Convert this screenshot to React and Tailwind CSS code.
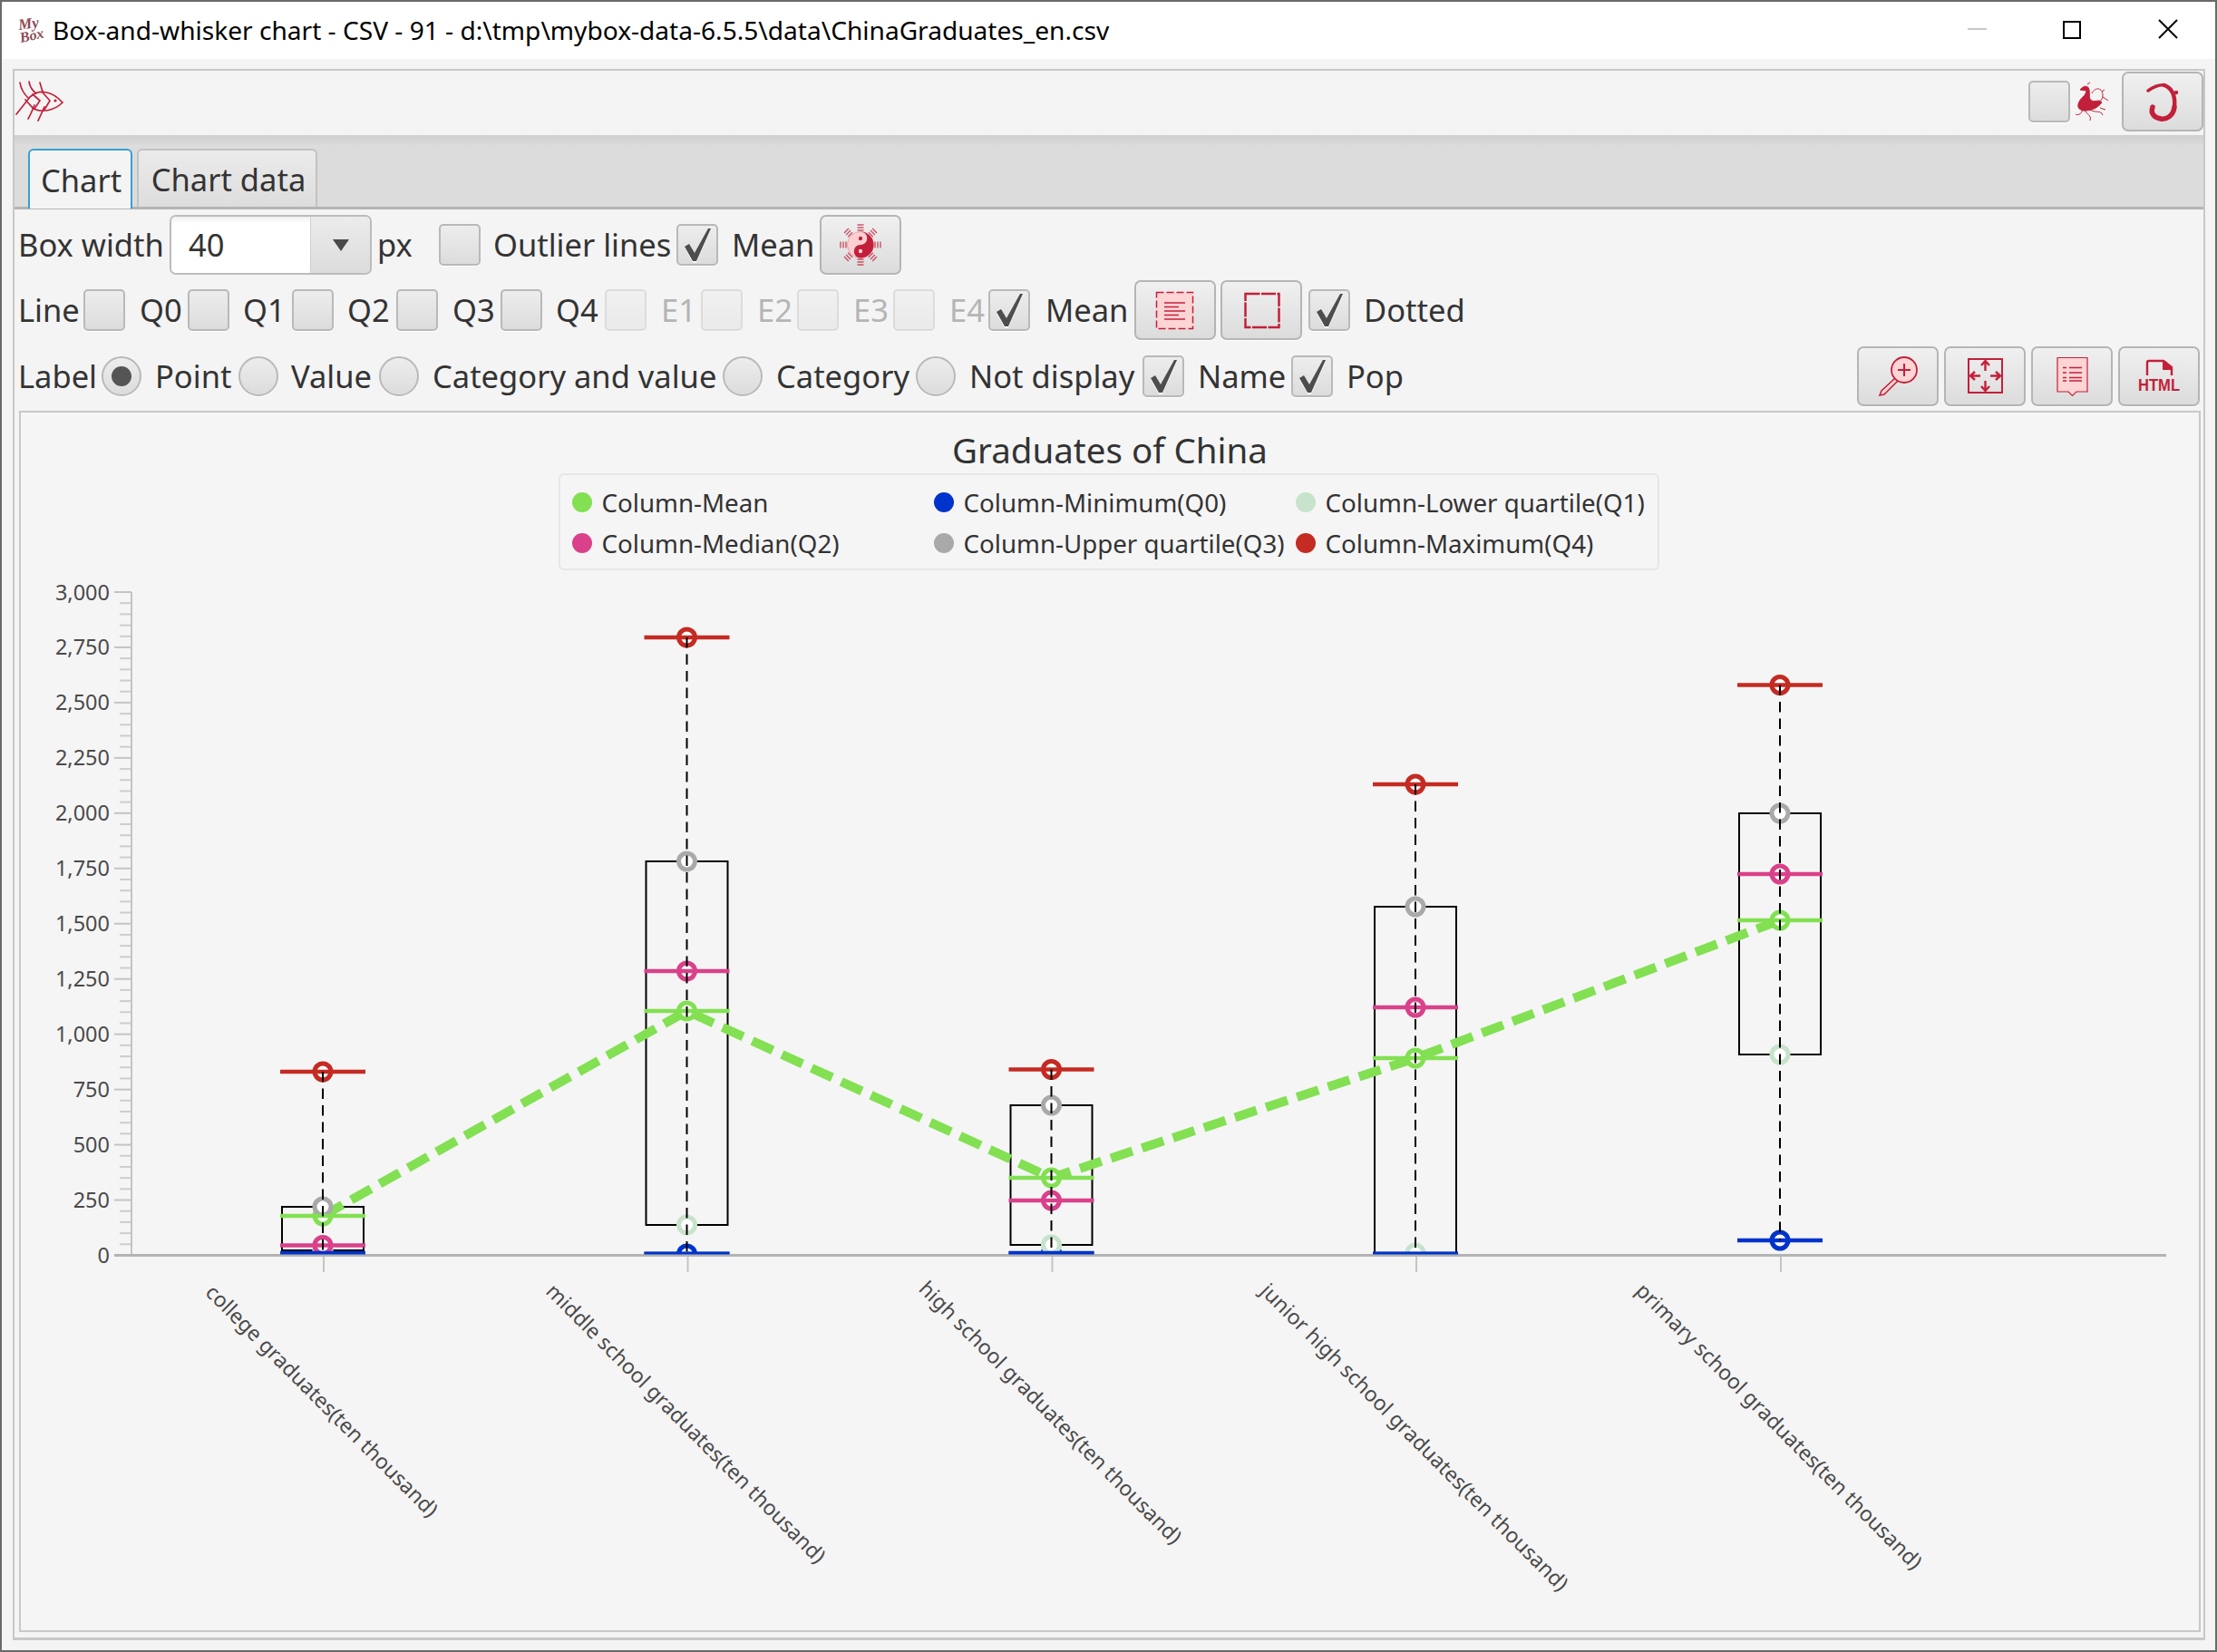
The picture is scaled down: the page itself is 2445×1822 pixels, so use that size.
const RED = "#c2203a";
const PINK = "#ffd4d4";

const Check = () => (
  <svg viewBox="0 0 42 42" className="w-[42px] h-[42px]">
    <path d="M7 23 L12 20 L18 30 L33 3 L36 3 L20 39 L16 39 Z" fill="#fff" transform="translate(0 1.5)" />
    <path d="M7 23 L12 20 L18 30 L33 3 L36 3 L20 39 L16 39 Z" fill="#4d4d4d" />
  </svg>
);

const CheckBox = ({ checked, disabled }) => (
  <div
    className={`box-border w-[46px] h-[46px] shrink-0 rounded-[5px] border-2 border-[#b9b9b9] bg-gradient-to-b from-[#ededed] to-[#dcdcdc] shadow-[0_1px_0_#fff] ${
      disabled ? "opacity-40" : ""
    }`}
  >
    {checked && <Check />}
  </div>
);

const Radio = ({ checked }) => (
  <div className="box-border w-[44px] h-[44px] shrink-0 rounded-full border-2 border-[#b9b9b9] bg-gradient-to-b from-[#ededed] to-[#dcdcdc] shadow-[0_1px_0_#fff] flex items-center justify-center">
    {checked && <div className="w-[22px] h-[22px] rounded-full bg-[#555]" />}
  </div>
);

const Btn = ({ box, children, className = "" }) => (
  <div className={`box-border w-[90px] h-[66px] shrink-0 rounded-[7px] border-2 border-[#b5b5b5] bg-gradient-to-b from-[#f0f0f0] to-[#dcdcdc] shadow-[0_1px_0_#fff] ${className}`}>
    <svg viewBox={box} className="w-[86px] h-[62px]">
      {children}
    </svg>
  </div>
);

const trigrams = [0, 45, 90, 135, 180, 225, 270, 315];

const YinYang = () => (
  <Btn box="906 239 86 62">
    {trigrams.map((a) => (
      <g key={a} transform={`rotate(${a} 949 270)`} stroke={RED} strokeWidth="1.4" opacity="0.75">
        <path d="M945.5 248 H952.5 M945.5 251 H952.5 M945.5 254 H952.5" />
      </g>
    ))}
    <circle cx="949" cy="270" r="14.5" fill="#fcd0d2" stroke="#eaa6ae" strokeWidth="1" />
    <path d="M949 255.5 A14.5 14.5 0 0 1 949 284.5 A7.25 7.25 0 0 1 949 270 A7.25 7.25 0 0 0 949 255.5 Z" fill={RED} />
    <circle cx="949" cy="263" r="2.2" fill={RED} />
    <circle cx="949" cy="277" r="2.2" fill={PINK} />
  </Btn>
);

const RowIcon = () => (
  <Btn box="1253 311 86 62">
    <rect x="1275.5" y="322.5" width="40" height="40" fill={PINK} stroke={RED} strokeWidth="1.5" strokeDasharray="8 3" />
    <path d="M1284 334 H1307 M1284 338.5 H1300 M1284 343 H1307 M1284 347.5 H1300 M1284 352 H1307" stroke={RED} strokeWidth="1.5" />
  </Btn>
);

const BorderIcon = () => (
  <Btn box="1348 311 86 62">
    <rect x="1373.5" y="324" width="37" height="37" fill="none" stroke={RED} strokeWidth="2.5" strokeDasharray="16 1.5" />
  </Btn>
);

const ZoomIcon = () => (
  <Btn box="2050 384 86 62">
    <path d="M2090 417 L2075 431 L2073 436 L2078 435 L2093 420 Z" fill={PINK} stroke={RED} strokeWidth="1.5" />
    <circle cx="2100" cy="408" r="14" fill={PINK} stroke={RED} strokeWidth="1.8" />
    <path d="M2093 408 H2107 M2100 401 V415" stroke={RED} strokeWidth="2" />
  </Btn>
);

const FitIcon = () => (
  <Btn box="2146 384 86 62">
    <rect x="2171" y="396" width="37" height="37" fill="none" stroke={RED} strokeWidth="2" />
    <path d="M2189.5 398 V409 M2185 403 L2189.5 398 L2194 403 M2189.5 431 V420 M2185 426 L2189.5 431 L2194 426 M2173 414.5 H2184 M2178 410 L2173 414.5 L2178 419 M2206 414.5 H2195 M2201 410 L2206 414.5 L2201 419" fill="none" stroke={RED} strokeWidth="2.4" />
  </Btn>
);

const NoteIcon = () => (
  <Btn box="2242 384 86 62">
    <path d="M2269 394.5 H2302 V432 H2290 L2285.5 436.5 L2281 432 H2269 Z" fill={PINK} stroke={RED} strokeWidth="1.2" />
    <path d="M2275 405.5 H2279 M2282 405.5 H2296 M2275 411 H2279 M2282 411 H2296 M2275 416.5 H2279 M2282 416.5 H2296 M2275 420 H2279 M2282 420 H2296" stroke={RED} strokeWidth="1.5" />
  </Btn>
);

const HtmlIcon = () => (
  <Btn box="2338 384 86 62">
    <path d="M2368 414 V400 Q2368 398 2370 398 H2386 L2395 405 V414" fill="none" stroke={RED} strokeWidth="2.4" />
    <path d="M2385 398 H2388 L2395 405 V408 H2385 Z" fill={RED} />
    <text x="2358" y="431" textLength="46" lengthAdjust="spacingAndGlyphs" fill={RED} fontFamily="Liberation Sans" fontWeight="700" fontSize="19">HTML</text>
  </Btn>
);

const Logo = () => (
  <svg viewBox="0 0 40 36" className="w-[40px] h-[36px] shrink-0 ml-[-2px] overflow-visible">
    <text x="3" y="17" fontFamily="Liberation Serif" fontStyle="italic" fontWeight="700" fontSize="17" fill="#8d4b55" transform="rotate(-8 3 17)">My</text>
    <text x="5" y="31" fontFamily="Liberation Serif" fontStyle="italic" fontWeight="700" fontSize="16" fill="#8d4b55" transform="rotate(-12 5 31)">Box</text>
  </svg>
);

const Fish = () => (
  <svg viewBox="16 90 54 46" className="w-[54px] h-[46px]" fill="none" stroke={RED} strokeWidth="1.7" strokeLinecap="round">
    <path d="M17 128 L32 109 C42 100 56 102 68 115 C58 125 44 126 36 122 L27 112" />
    <path d="M21 93 C22 100 26 106 30 110 M31 92 C32 98 36 103 39 105 M43 93 C44 97 45 100 46 103 M30 133 C33 128 35 123 37 118 M41 135 C44 129 46 124 48 120" />
    <path d="M35 106 L43 113 L37 122 M46 104 L54 113 L48 123" />
    <circle cx="60" cy="113" r="1.6" fill={RED} stroke="none" />
  </svg>
);

const Phoenix = () => (
  <svg viewBox="2288 88 40 46" className="w-[40px] h-[46px] shrink-0 ml-[4px]" fill="none" stroke={RED} strokeWidth="1">
    <path d="M2293 114 C2295 106 2301 106 2302 99 L2295 98 C2298 94 2304 92 2305 98 C2306 104 2304 108 2308 110 C2312 112 2316 108 2319 112 C2314 119 2306 121 2300 121 C2295 121 2292 118 2293 114 Z" fill={RED} />
    <path d="M2306 120 C2312 124 2318 120 2320 126 M2300 120 C2302 126 2308 125 2306 132 M2298 120 C2296 126 2292 126 2290 125 M2308 102 C2312 94 2320 96 2320 104 C2320 110 2316 112 2314 110 M2319 100 L2322 98 M2320 106 L2326 110 M2303 92 L2306 90 M2317 118 L2323 120" />
  </svg>
);

const Dragon = () => (
  <svg viewBox="2343 81 86 62" className="w-[86px] h-[62px]" fill="none" stroke={RED} strokeLinecap="round">
    <path d="M2370 100 C2376 96 2382 93 2388 94" strokeWidth="3.5" />
    <path d="M2388 94 C2398 98 2400 108 2399 118" strokeWidth="4.5" />
    <path d="M2399 118 C2398 128 2390 132 2384 131 C2378 130 2372 126 2375 118" strokeWidth="5.5" />
    <circle cx="2401" cy="102" r="2.2" fill={RED} stroke="none" />
  </svg>
);

const legend = [
  ["Column-Mean", "#82e052"],
  ["Column-Minimum(Q0)", "#0033cc"],
  ["Column-Lower quartile(Q1)", "#c7e3cb"],
  ["Column-Median(Q2)", "#d9418a"],
  ["Column-Upper quartile(Q3)", "#a9a9a9"],
  ["Column-Maximum(Q4)", "#c42b23"],
];

const COLORS = { q0: "#0033cc", q1: "#c7e3cb", q2: "#d9418a", q3: "#a9a9a9", q4: "#c42b23", mean: "#82e052" };

const cats = [
  { x: 356, name: "college graduates(ten thousand)", ly: 1545, q0: 1382, q1: 1379, q2: 1373.5, q3: 1331, q4: 1182, mean: 1341 },
  { x: 757.5, name: "middle school graduates(ten thousand)", ly: 1570, q0: 1383, q1: 1351, q2: 1071, q3: 950, q4: 703, mean: 1115 },
  { x: 1159.5, name: "high school graduates(ten thousand)", ly: 1558, q0: 1382, q1: 1373, q2: 1324, q3: 1219, q4: 1179.5, mean: 1299 },
  { x: 1561, name: "junior high school graduates(ten thousand)", ly: 1585, q0: 1383, q1: 1382, q2: 1111, q3: 1000, q4: 865, mean: 1167 },
  { x: 1963, name: "primary school graduates(ten thousand)", ly: 1573, q0: 1368, q1: 1163, q2: 964, q3: 897, q4: 755.5, mean: 1015 },
];

const AXIS_FONT = "'Noto Sans', sans-serif";

const Chart = () => {
  const majors = [...Array(13).keys()];
  const minors = [...Array(61).keys()].filter((i) => i % 5 !== 0);
  const yOf = (t) => 1384.5 - (t * 731.5) / 60;
  const meanPts = cats.map((c) => `${c.x},${c.mean}`).join(" ");
  return (
    <svg viewBox="23 640 2402 1157" className="w-[2402px] h-[1157px] absolute left-0 top-[185px]">
      <defs>
        <clipPath id="plot">
          <rect x="146" y="640" width="2243" height="743" />
        </clipPath>
      </defs>
      {minors.map((i) => (
        <line key={i} x1="132" x2="145" y1={yOf(i)} y2={yOf(i)} stroke="#cdcdcd" strokeWidth="2" />
      ))}
      {majors.map((i) => (
        <g key={i}>
          <line x1="126" x2="145" y1={yOf(i * 5)} y2={yOf(i * 5)} stroke="#c4c4c4" strokeWidth="2" />
          <text x="121" y={yOf(i * 5) + 8.5} textAnchor="end" fontFamily={AXIS_FONT} fontSize="23.5" fill="#4a4a4a">
            {(i * 250).toLocaleString("en-US")}
          </text>
        </g>
      ))}
      <line x1="145" x2="145" y1="653" y2="1385" stroke="#c4c4c4" strokeWidth="2" />
      {cats.map((c) => (
        <line key={c.x} x1={c.x + 1} x2={c.x + 1} y1="1385" y2="1403" stroke="#c4c4c4" strokeWidth="2" />
      ))}
      {cats.map((c) => (
        <rect key={c.x} x={c.x - 45} y={c.q3} width="90" height={Math.min(c.q1, 1384) - c.q3} fill="none" stroke="#000" strokeWidth="2" />
      ))}
      <polyline points={meanPts} fill="none" stroke={COLORS.mean} strokeWidth="10" strokeDasharray="25 11" />
      {cats.map((c) => (
        <g key={c.x}>
          <g clipPath="url(#plot)">
            {["q0", "mean", "q1", "q3", "q2", "q4"].map((k) => (
              <circle key={k} cx={c.x} cy={c[k]} r="9" fill="#fff" stroke={COLORS[k]} strokeWidth="5" />
            ))}
          </g>
          {["mean", "q2", "q4", "q0"].map((k) => (
            <line key={k} x1={c.x - 47} x2={c.x + 47} y1={c[k]} y2={c[k]} stroke={COLORS[k]} strokeWidth="4.5" />
          ))}
          <line x1={c.x} x2={c.x} y1={c.q4} y2={c.q0} stroke="#000" strokeWidth="2" strokeDasharray="11.5 7" />
          <text
            x={c.x - 1}
            y={c.ly + 8}
            textAnchor="middle"
            transform={`rotate(45 ${c.x - 1} ${c.ly})`}
            fontFamily={AXIS_FONT}
            fontSize="23"
            fill="#4a4a4a"
          >
            {c.name}
          </text>
        </g>
      ))}
      <line x1="126" x2="2389" y1="1384.5" y2="1384.5" stroke="#b4b4b4" strokeWidth="3" />
      {cats.map((c) => (
        <line key={c.x} x1={c.x - 47} x2={c.x + 47} y1="1382" y2="1382" stroke={c.q0 > 1380 ? COLORS.q0 : "none"} strokeWidth="3" />
      ))}
    </svg>
  );
};

export default function App() {
  return (
    <div className="relative w-[2445px] h-[1822px] box-border overflow-hidden border-2 border-[#6a6a6a] bg-[#f4f4f4] font-['Noto_Sans',sans-serif] text-[34.5px] leading-[1.3] text-[#333]">
      {/* Title bar */}
      <div className="flex items-center h-[63px] bg-white pl-[18px] pr-[40px] text-black">
        <Logo />
        <span className="text-[28.1px]">Box-and-whisker chart - CSV - 91 - d:\tmp\mybox-data-6.5.5\data\ChinaGraduates_en.csv</span>
        <svg viewBox="2160 2 250 60" className="ml-auto w-[250px] h-[60px] mr-[-8px]" fill="none">
          <path d="M2169 30 H2190" stroke="#c8c8c8" strokeWidth="2" />
          <rect x="2275" y="22" width="18" height="18" stroke="#000" strokeWidth="2" />
          <path d="M2380 20 L2400 40 M2400 20 L2380 40" stroke="#000" strokeWidth="2" />
        </svg>
      </div>

      {/* Main panel */}
      <div className="box-border ml-[12px] mt-[11px] w-[2418px] h-[1733px] border-2 border-b-[3px] border-[#c8c8c8] flex flex-col">
        {/* Top toolbar */}
        <div className="flex items-center h-[71px] shrink-0">
          <div className="ml-[1px] mb-[6px]">
            <Fish />
          </div>
          <div className="ml-auto mb-[4px] flex items-center">
            <CheckBox />
            <Phoenix />
            <div className="box-border w-[90px] h-[66px] ml-[13px] rounded-[7px] border-2 border-[#b5b5b5] bg-gradient-to-b from-[#f0f0f0] to-[#dcdcdc]">
              <Dragon />
            </div>
          </div>
        </div>

        {/* Tabs */}
        <div className="flex items-end gap-[5px] h-[82px] shrink-0 pl-[15px] bg-gradient-to-b from-[#cfcfcf] to-[#dcdcdc] to-[15%] border-b-[3px] border-[#b4b4b4]">
          <div className="box-border w-[115px] h-[66px] mb-[-2px] pl-[2px] pt-[3px] rounded-t-[6px] border-2 border-b-0 border-[#3aa0cf] bg-[#f4f4f4] flex items-center justify-center">
            Chart
          </div>
          <div className="box-border w-[199px] h-[64px] pl-[3px] pt-[3px] rounded-t-[6px] border-2 border-b-0 border-[#c2c2c2] bg-gradient-to-b from-[#ebebeb] to-[#dddddd] flex items-center justify-center">
            Chart data
          </div>
        </div>

        {/* Option rows */}
        <div className="flex items-center h-[66px] mt-[6px] pl-[5px] shrink-0 [&>span]:pt-[1px] [&>span]:translate-x-[-1px]">
          <span className="w-[166px]">Box width</span>
          <div className="box-border flex w-[223px] h-[66px] rounded-[7px] border-2 border-[#bcbcbc] overflow-hidden">
            <div className="flex-1 bg-gradient-to-b from-[#f0f0f0] to-white to-[12%] pl-[19px] pt-[1px] flex items-center">40</div>
            <div className="w-[66px] bg-gradient-to-b from-[#ececec] to-[#dcdcdc] border-l border-[#cfcfcf] flex items-center justify-center">
              <div className="w-0 h-0 border-x-[9px] border-x-transparent border-t-[13px] border-t-[#4a4a4a]" />
            </div>
          </div>
          <span className="w-[67px] ml-[7px]">px</span>
          <CheckBox />
          <span className="w-[201px] ml-[15px]">Outlier lines</span>
          <CheckBox checked />
          <span className="w-[96px] ml-[16px]">Mean</span>
          <YinYang />
        </div>

        <div className="flex items-center h-[66px] mt-[6px] pl-[5px] shrink-0 [&>span]:pt-[1px] [&>span]:translate-x-[-1px]">
          <span className="w-[71px]">Line</span>
          <CheckBox />
          <span className="w-[52px] ml-[17px]">Q0</span>
          <CheckBox />
          <span className="w-[53px] ml-[16px]">Q1</span>
          <CheckBox />
          <span className="w-[53px] ml-[16px]">Q2</span>
          <CheckBox />
          <span className="w-[52px] ml-[17px]">Q3</span>
          <CheckBox />
          <span className="w-[53px] ml-[16px]">Q4</span>
          <CheckBox disabled />
          <span className="w-[43px] ml-[17px] text-[#b5b5b5]">E1</span>
          <CheckBox disabled />
          <span className="w-[43px] ml-[17px] text-[#b5b5b5]">E2</span>
          <CheckBox disabled />
          <span className="w-[43px] ml-[17px] text-[#b5b5b5]">E3</span>
          <CheckBox disabled />
          <span className="w-[42px] ml-[17px] text-[#b5b5b5]">E4</span>
          <CheckBox checked />
          <span className="w-[97px] ml-[18px]">Mean</span>
          <RowIcon />
          <div className="ml-[5px]">
            <BorderIcon />
          </div>
          <div className="ml-[7px]">
            <CheckBox checked />
          </div>
          <span className="ml-[16px]">Dotted</span>
        </div>

        <div className="flex items-center h-[66px] mt-[7px] pl-[5px] pr-[4px] shrink-0 [&>span]:pt-[1px] [&>span]:translate-x-[-1px]">
          <span className="w-[91px]">Label</span>
          <Radio checked />
          <span className="w-[91px] ml-[16px]">Point</span>
          <Radio />
          <span className="w-[96px] ml-[15px]">Value</span>
          <Radio />
          <span className="w-[319px] ml-[16px]">Category and value</span>
          <Radio />
          <span className="w-[153px] ml-[16px]">Category</span>
          <Radio />
          <span className="w-[190px] ml-[16px]">Not display</span>
          <CheckBox checked />
          <span className="w-[102px] ml-[16px]">Name</span>
          <CheckBox checked />
          <span className="ml-[16px]">Pop</span>
          <div className="ml-auto flex gap-[6px]">
            <ZoomIcon />
            <FitIcon />
            <NoteIcon />
            <HtmlIcon />
          </div>
        </div>

        {/* Chart panel */}
        <div className="relative box-border ml-[5px] mr-[3px] mt-[5px] mb-[6px] flex-1 border-2 border-[#c8c8c8] bg-[#f5f5f5] flex flex-col items-center">
          <div className="mt-[19px] text-[38.5px] leading-[44px] text-[#333]">Graduates of China</div>
          <div className="box-border mt-[4px] ml-[-3px] w-[1214px] h-[107px] rounded-[6px] border-2 border-[#e6e6e6] pl-[13px] pt-[7px] grid grid-cols-[399px_399px_1fr] auto-rows-[45px] text-[27.7px]">
            {legend.map(([name, color]) => (
              <div key={name} className="flex items-center gap-[11px]">
                <div className="w-[22px] h-[22px] rounded-full" style={{ backgroundColor: color }} />
                <span>{name}</span>
              </div>
            ))}
          </div>
          <Chart />
        </div>
      </div>
    </div>
  );
}
